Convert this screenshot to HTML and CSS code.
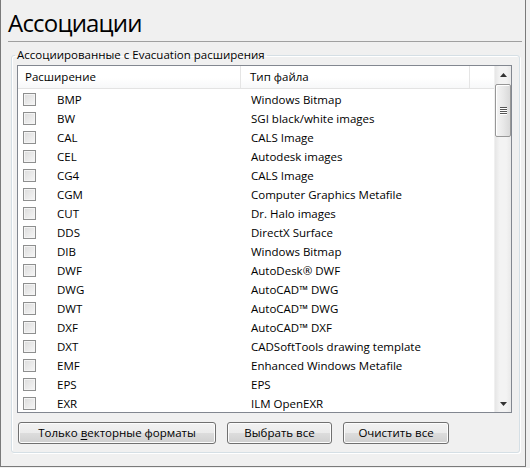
FILE: index.html
```html
<!DOCTYPE html>
<html lang="ru">
<head>
<meta charset="utf-8">
<title>Ассоциации</title>
<link rel="stylesheet" href="styles.css">
</head>
<body>
<div class="window">
  <h1 class="title">Ассоциации</h1>
  <div class="sep"></div>
  <fieldset class="group">
    <legend class="legend">Ассоциированные с Evacuation расширения</legend>
    <div class="listbox">
      <div class="list">
        <div class="header">
          <div class="hcell">Расширение</div>
          <div class="hcell">Тип файла</div>
          <div class="hcell"></div>
        </div>
        <div class="rows">
          <div class="row"><span class="cb"></span><span class="ext">BMP</span><span class="type">Windows Bitmap</span></div>
          <div class="row"><span class="cb"></span><span class="ext">BW</span><span class="type">SGI black/white images</span></div>
          <div class="row"><span class="cb"></span><span class="ext">CAL</span><span class="type">CALS Image</span></div>
          <div class="row"><span class="cb"></span><span class="ext">CEL</span><span class="type">Autodesk images</span></div>
          <div class="row"><span class="cb"></span><span class="ext">CG4</span><span class="type">CALS Image</span></div>
          <div class="row"><span class="cb"></span><span class="ext">CGM</span><span class="type">Computer Graphics Metafile</span></div>
          <div class="row"><span class="cb"></span><span class="ext">CUT</span><span class="type">Dr. Halo images</span></div>
          <div class="row"><span class="cb"></span><span class="ext">DDS</span><span class="type">DirectX Surface</span></div>
          <div class="row"><span class="cb"></span><span class="ext">DIB</span><span class="type">Windows Bitmap</span></div>
          <div class="row"><span class="cb"></span><span class="ext">DWF</span><span class="type">AutoDesk® DWF</span></div>
          <div class="row"><span class="cb"></span><span class="ext">DWG</span><span class="type">AutoCAD™ DWG</span></div>
          <div class="row"><span class="cb"></span><span class="ext">DWT</span><span class="type">AutoCAD™ DWG</span></div>
          <div class="row"><span class="cb"></span><span class="ext">DXF</span><span class="type">AutoCAD™ DXF</span></div>
          <div class="row"><span class="cb"></span><span class="ext">DXT</span><span class="type">CADSoftTools drawing template</span></div>
          <div class="row"><span class="cb"></span><span class="ext">EMF</span><span class="type">Enhanced Windows Metafile</span></div>
          <div class="row"><span class="cb"></span><span class="ext">EPS</span><span class="type">EPS</span></div>
          <div class="row"><span class="cb"></span><span class="ext">EXR</span><span class="type">ILM OpenEXR</span></div>
        </div>
      </div>
      <div class="scrollbar">
        <div class="arrow"><svg width="7" height="4" viewBox="0 0 7 4"><path d="M3.5 0 L7 4 L0 4 Z" fill="#333"/></svg></div>
        <div class="thumb"><span class="grip"></span><span class="grip"></span><span class="grip"></span><span class="grip"></span></div>
        <div class="track"></div>
        <div class="arrow"><svg width="7" height="4" viewBox="0 0 7 4"><path d="M0 0 L7 0 L3.5 4 Z" fill="#333"/></svg></div>
      </div>
    </div>
    <div class="buttons">
      <button class="btn btn-wide">Только <u>в</u>екторные форматы</button>
      <button class="btn btn-sel">Выбрать все</button>
      <button class="btn btn-clr">Очистить все</button>
    </div>
  </fieldset>
</div>
</body>
</html>
```

FILE: styles.css
```css
* { box-sizing: border-box; }
html, body {
  margin: 0;
  padding: 0;
  background: #f0f0f0;
}
body {
  font-family: "Open Sans", "Noto Sans", sans-serif;
  font-size: 11.5px;
  color: #000;
}
.window {
  width: 526px;
  height: 467px;
  background: #f0f0f0;
  border-left: 1px solid #7a7a7a;
  border-right: 1px solid #7a7a7a;
  border-bottom: 1px solid #7a7a7a;
  display: flex;
  flex-direction: column;
}
.title {
  margin: 0;
  padding: 6px 0 0 7px;
  height: 41px;
  font-weight: normal;
  font-size: 24px;
  line-height: 34px;
  letter-spacing: -0.8px;
}
.sep {
  height: 1px;
  flex: none;
  background: #a0a0a0;
  margin: 0 3px 0 7px;
}
.group {
  margin: 5px 5px 0 10px;
  padding: 0 7px 8px 5px;
  border: 1px solid #d5dfe5;
  border-radius: 3px;
  box-shadow: inset 1px 1px 0 #fff, 1px 1px 0 #fff;
  display: flex;
  flex-direction: column;
  min-width: 0;
}
.legend {
  padding: 0 2px;
  margin-left: -2px;
  line-height: 16px;
  font-size: 11.5px;
}
.listbox {
  margin-top: 2px;
  height: 348px;
  flex: none;
  border: 1px solid #828790;
  background: #fff;
  display: flex;
  overflow: hidden;
}
.list {
  flex: 1;
  min-width: 0;
  display: flex;
  flex-direction: column;
}
.header {
  display: grid;
  grid-template-columns: 223px 229px 1fr;
  height: 23px;
  flex: none;
  border-bottom: 1px solid #e3e3e3;
  background: linear-gradient(#ffffff, #ffffff 55%, #f7f8f9);
}
.hcell {
  border-right: 1px solid #e5e5e5;
  padding-left: 7px;
  line-height: 22px;
}
.hcell:nth-child(2) { padding-left: 9px; }
.hcell:last-child { border-right: none; }
.rows {
  padding-top: 1px;
}
.row {
  display: grid;
  grid-template-columns: 13px 215px 1fr;
  align-items: center;
  height: 19px;
  padding-left: 5px;
}
.cb {
  width: 13px;
  height: 13px;
  border: 1px solid #8e8f8f;
  background: linear-gradient(135deg, #dcdcdc, #f6f6f6);
  box-shadow: inset 0 0 0 1px #f4f4f4;
}
.ext { padding-left: 21px; line-height: 19px; }
.type { line-height: 19px; }
.scrollbar {
  width: 17px;
  flex: none;
  display: flex;
  flex-direction: column;
  background: linear-gradient(90deg, #e6e6e6, #f3f3f3 30%, #f3f3f3 70%, #e9e9e9);
  border-left: 1px solid #f0f0f0;
}
.arrow {
  height: 17px;
  display: flex;
  align-items: center;
  justify-content: center;
}
.thumb {
  height: 53px;
  margin: 1px 0 0 0;
  border: 1px solid #979797;
  border-radius: 2px;
  background: linear-gradient(90deg, #f4f4f4, #e9e9e9 50%, #d9d9d9);
  box-shadow: inset 1px 1px 0 #fff;
  display: flex;
  flex-direction: column;
  align-items: center;
  justify-content: center;
  gap: 1px;
}
.grip {
  width: 7px;
  height: 1px;
  background: #555;
  box-shadow: 0 1px 0 #fff;
}
.track { flex: 1; }
.buttons {
  display: flex;
  gap: 11px;
  margin-top: 9px;
  padding-left: 1px;
}
.btn {
  height: 22px;
  font-family: inherit;
  font-size: 11.5px;
  color: #000;
  border: 1px solid #707070;
  border-radius: 3px;
  background: linear-gradient(#f2f2f2, #ebebeb 50%, #dddddd 50%, #cfcfcf);
  box-shadow: inset 0 0 0 1px #fcfcfc;
  padding: 0;
  line-height: 18px;
}
.btn u { text-decoration: underline; text-underline-offset: 2px; }
.btn-wide { width: 198px; }
.btn-sel { width: 105px; }
.btn-clr { width: 106px; }
```
